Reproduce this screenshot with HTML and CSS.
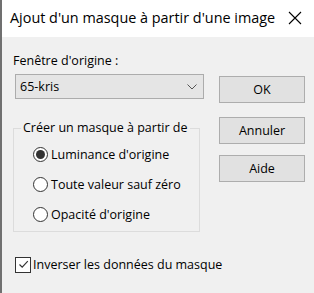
FILE: index.html
```html
<html>

<head>
    <link rel="stylesheet" href="styles.css">
</head>

<body>
    <div id="window">
        <div id="titlebar">
            <div id="title">Ajout d'un masque à partir d'une image</div>
            <svg class="close" width="14" height="14" viewBox="0 0 14 14">
                <path d="M1 1 L13 13 M13 1 L1 13" stroke="#000" stroke-width="1.1" fill="none" />
            </svg>
        </div>
        <div id="content">
            <div id="main">
                <div id="left">
                    <div class="label">Fenêtre d'origine :</div>
                    <div class="select">
                        <span>65-kris</span>
                        <svg width="10" height="6" viewBox="0 0 10 6">
                            <path d="M0.5 0.5 L5 5 L9.5 0.5" stroke="#555" stroke-width="1" fill="none" />
                        </svg>
                    </div>
                    <fieldset class="group">
                        <legend>Créer un masque à partir de</legend>
                        <div class="radio checked"><span class="dot"></span>Luminance d'origine</div>
                        <div class="radio"><span class="dot"></span>Toute valeur sauf zéro</div>
                        <div class="radio"><span class="dot"></span>Opacité d'origine</div>
                    </fieldset>
                </div>
                <div id="right">
                    <div class="button">OK</div>
                    <div class="button annuler">Annuler</div>
                    <div class="button aide">Aide</div>
                </div>
            </div>
            <div class="check">
                <span class="box">
                    <svg width="13" height="13" viewBox="0 0 13 13">
                        <path d="M2.5 6.5 L5.2 9.2 L10.8 3.2" stroke="#333" stroke-width="1.2" fill="none" />
                    </svg>
                </span>
                Inverser les données du masque
            </div>
        </div>
    </div>
</body>

</html>
```

FILE: styles.css
```css
* {
    margin: 0;
    padding: 0;
    box-sizing: border-box;
}

body {
    width: 314px;
    height: 293px;
    overflow: hidden;
    font-family: 'Open Sans', 'Noto Sans', sans-serif;
    font-size: 12.5px;
    color: #000;
}

div#window {
    height: 293px;
    border-left: 2px solid #707070;
    background-color: #f0f0f0;
}

div#titlebar {
    height: 37px;
    background-color: #fff;
    display: flex;
    align-items: center;
    padding-left: 8px;
}

div#title {
    font-size: 14.4px;
    margin-top: -2px;
    white-space: nowrap;
    flex: 1;
}

svg.close {
    margin-top: -1px;
    margin-right: 12px;
}

div#content {
    padding: 15px 0 0 11px;
}

div#main {
    display: flex;
}

div#left {
    width: 191px;
}

div.label {
    height: 18px;
    line-height: 18px;
}

div.select {
    margin-top: 4px;
    margin-left: 2px;
    height: 25px;
    border: 1px solid #acacac;
    background-color: #e5e5e5;
    display: flex;
    align-items: center;
    justify-content: space-between;
    padding: 0 6px 0 4px;
}

fieldset.group {
    margin-top: 22px;
    width: 187px;
    height: 111px;
    border: 1px solid #dcdcdc;
    padding: 11px 0 0 19px;
}

fieldset.group legend {
    margin-left: -12px;
    padding: 0 2px;
    line-height: 14px;
    white-space: nowrap;
}

div.radio {
    display: flex;
    align-items: center;
    height: 16px;
    margin-bottom: 14px;
    white-space: nowrap;
}

div.radio span.dot {
    width: 15px;
    height: 15px;
    border: 1px solid #333;
    border-radius: 50%;
    background-color: #fff;
    margin-right: 3px;
    display: flex;
    align-items: center;
    justify-content: center;
    flex-shrink: 0;
}

div.radio.checked span.dot::after {
    content: '';
    width: 9px;
    height: 9px;
    border-radius: 50%;
    background-color: #333;
}

div#right {
    margin-left: 15px;
    padding-top: 24px;
}

div.button {
    width: 86px;
    height: 27px;
    border: 1px solid #adadad;
    background-color: #e1e1e1;
    display: flex;
    align-items: center;
    justify-content: center;
}

div.button.annuler {
    margin-top: 14px;
}

div.button.aide {
    margin-top: 11px;
}

div.check {
    margin-top: 24px;
    margin-left: 2px;
    display: flex;
    align-items: center;
}

div.check span.box {
    width: 16px;
    height: 16px;
    border: 1px solid #333;
    background-color: #fff;
    margin-right: 2px;
    display: flex;
    align-items: center;
    justify-content: center;
}
```
